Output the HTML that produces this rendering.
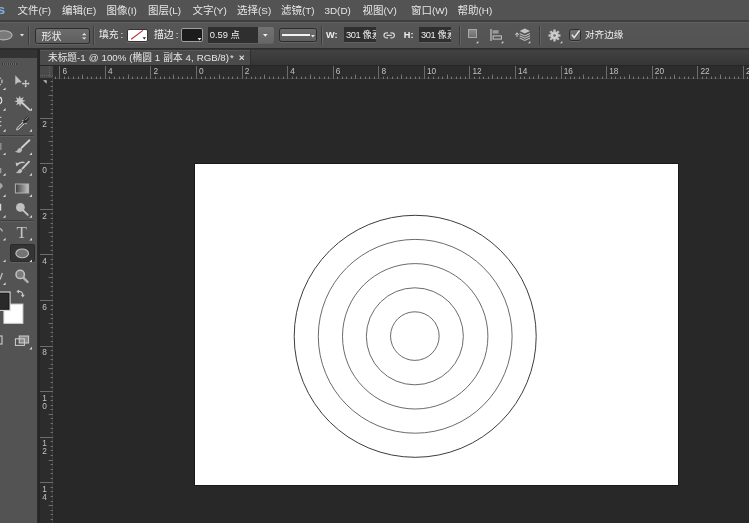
<!DOCTYPE html>
<html lang="zh"><head><meta charset="utf-8"><title>Photoshop</title>
<style>
html,body{margin:0;padding:0}
body{width:749px;height:523px;overflow:hidden;background:#282828;position:relative;font-family:"Liberation Sans","Noto Sans CJK SC",sans-serif;color:#dcdcdc}
.abs{position:absolute}
#menubar{position:absolute;left:0;top:0;width:749px;height:20px;background:#535353;border-bottom:2px solid #3e3e3e}
.mi .cjm{font-size:10.5px}
.mi{position:absolute;top:4px;font-size:9.9px;line-height:13px;white-space:nowrap;color:#e6e6e6;letter-spacing:0px}
#ps{position:absolute;left:-11.6px;top:3.4px;font-size:13.6px;font-weight:bold;color:#7fb0e2;line-height:14px}
#opt{position:absolute;left:0;top:22px;width:749px;height:27px;background:linear-gradient(#565656,#535353);border-top:1px solid #606060;box-sizing:border-box;border-bottom:1px solid #2e2e2e}
.ot{position:absolute;font-size:9.6px;line-height:12px;white-space:nowrap;color:#eeeeee}
.sep{position:absolute;top:26px;width:1px;height:19px;background:#3c3c3c;box-shadow:1px 0 0 #646464}
.dd{position:absolute;box-sizing:border-box;border:1px solid #2c2c2c;border-radius:2.5px;background:linear-gradient(#6c6c6c,#5e5e5e);box-shadow:0 1px 0 #626262}
.inp{position:absolute;background:#2f2f2f;box-sizing:border-box;overflow:hidden;box-shadow:0 1px 0 #616161}
#tabbar{position:absolute;left:38px;top:49px;width:711px;height:17px;background:linear-gradient(#424242,#353535);border-top:1px solid #343434;border-bottom:1px solid #262626;box-sizing:border-box}
#tab{position:absolute;left:40px;top:50px;width:210px;height:15px;background:#4b4b4b;border-right:1px solid #2e2e2e;box-shadow:inset 0 1px 0 #585858}
#tabt{position:absolute;left:48px;top:52px;font-size:9.7px;line-height:12px;white-space:nowrap;color:#e6e6e6;word-spacing:0.3px}
#tools{position:absolute;left:0;top:49px;width:37px;height:474px;background:#535353;border-right:1px solid #2c2c2c}
#toolhd{position:absolute;left:0;top:49px;width:37px;height:9px;background:#333;border-top:1px solid #2c2c2c;box-sizing:border-box}
#gap{position:absolute;left:38px;top:49px;width:2px;height:474px;background:#262626}
#hr{position:absolute;left:40px;top:66px;width:709px;height:13px;background:#2c2c2c}
#vr{position:absolute;left:40px;top:66px;width:13px;height:457px;background:#2c2c2c}
.hr{position:absolute;left:40px;top:66px}
.vr{position:absolute;left:40px;top:79px}
#corner{position:absolute;left:40px;top:66px;width:13px;height:12px;background:#494949}
#hbase{position:absolute;left:53px;top:78px;width:696px;height:1px;background:#3d3d3d}
#vbase{position:absolute;left:52px;top:79px;width:1px;height:444px;background:#3d3d3d}
.rl{position:absolute;font-size:8.3px;line-height:9px;color:#c2c2c2}
#doc{position:absolute;left:195.4px;top:163.7px;width:483px;height:321.4px;background:#fff;box-shadow:0 0 0 0.6px #111}
.ln{position:absolute;left:0;width:34px;height:1px;background:#3d3d3d;box-shadow:0 1px 0 #5e5e5e}
#all{position:absolute;left:0;top:0;width:749px;height:523px;will-change:transform}
</style></head><body><div id="all">

<div id="menubar"><span id="ps">Ps</span><span class="mi" style="left:17.5px"><span class="cjm">文件</span>(F)</span><span class="mi" style="left:62.0px"><span class="cjm">编辑</span>(E)</span><span class="mi" style="left:106.5px"><span class="cjm">图像</span>(I)</span><span class="mi" style="left:148.0px"><span class="cjm">图层</span>(L)</span><span class="mi" style="left:192.5px"><span class="cjm">文字</span>(Y)</span><span class="mi" style="left:237.0px"><span class="cjm">选择</span>(S)</span><span class="mi" style="left:281.0px"><span class="cjm">滤镜</span>(T)</span><span class="mi" style="left:324.5px">3D(D)</span><span class="mi" style="left:362.5px"><span class="cjm">视图</span>(V)</span><span class="mi" style="left:411.0px"><span class="cjm">窗口</span>(W)</span><span class="mi" style="left:457.5px"><span class="cjm">帮助</span>(H)</span></div>

<div id="opt"></div>
<!-- options bar content (absolute page coords) -->
<svg class="abs" style="left:0;top:29px" width="14" height="13" viewBox="0 0 14 13"><ellipse cx="3.5" cy="6.3" rx="8.6" ry="4.6" fill="#7a7a7a" stroke="#b4b4b4" stroke-width="1.1"/></svg>
<svg class="abs" style="left:20px;top:34.2px" width="5" height="3" viewBox="0 0 5 3"><path d="M0 0H4L2 2.5Z" fill="#e8e8e8"/></svg>
<div class="sep" style="left:28px"></div>
<div class="dd" style="left:35px;top:27.5px;width:54.5px;height:16px"></div>
<span class="ot" style="left:41.4px;top:30.5px;font-size:10px">形状</span>
<svg class="abs" style="left:81.5px;top:32.6px" width="5" height="7" viewBox="0 0 5 7"><path d="M0 2.2H4.4L2.2 0Z M0 4.4H4.4L2.2 6.6Z" fill="#e8e8e8"/></svg>
<div class="sep" style="left:93px"></div>
<span class="ot" style="left:99px;top:29.1px;font-size:9.8px">填充<span style="margin-left:2px">:</span></span>
<div class="abs" style="left:126.5px;top:28.5px;width:21px;height:13px;background:#fff;border:1px solid #333;border-radius:2px;box-sizing:border-box;box-shadow:0 1px 0 #666"></div>
<svg class="abs" style="left:127px;top:29px" width="20" height="12" viewBox="0 0 20 12"><path d="M4.2 10.2L16 1.4" stroke="#b5333a" stroke-width="1.15"/><path d="M15.6 8.3H19L17.3 10.4Z" fill="#222"/></svg>
<span class="ot" style="left:154px;top:29.1px;font-size:9.8px">描边<span style="margin-left:2.2px">:</span></span>
<div class="abs" style="left:180.5px;top:28.3px;width:22px;height:14px;background:#1c1c1c;border:1px solid #a0a0a0;border-radius:2px;box-sizing:border-box"></div>
<svg class="abs" style="left:196.5px;top:37.4px" width="5" height="4" viewBox="0 0 5 4"><path d="M0 0.4H4.6V3.6H0Z" fill="#1c1c1c"/><path d="M0.6 1H4.4L2.5 3.4Z" fill="#eee"/></svg>
<div class="inp" style="left:207.5px;top:27.3px;width:50.5px;height:15.4px"></div>
<span class="ot" style="left:209.8px;top:29px;font-size:9.3px">0.59 点</span>
<div class="abs" style="left:258px;top:27.3px;width:15.5px;height:15.4px;background:linear-gradient(#727272,#666);border-radius:0 2px 2px 0;box-shadow:0 1px 0 #616161"></div>
<svg class="abs" style="left:263.2px;top:34px" width="5" height="3" viewBox="0 0 5 3"><path d="M0 0H4.6L2.3 2.8Z" fill="#f0f0f0"/></svg>
<div class="dd" style="left:278.5px;top:28px;width:38.5px;height:13.6px"></div>
<div class="abs" style="left:282px;top:34.2px;width:27.5px;height:1.7px;background:#f2f2f2"></div>
<svg class="abs" style="left:310.6px;top:34.5px" width="4" height="3" viewBox="0 0 4 3"><path d="M0 0H3.8L1.9 2.5Z" fill="#e8e8e8"/></svg>
<div class="sep" style="left:321px"></div>
<span class="ot" style="left:326px;top:29px;font-weight:bold;font-size:9.2px">W:</span>
<div class="inp" style="left:343.7px;top:27.3px;width:32px;height:14.4px"><span class="ot" style="left:2.3px;top:1.6px;font-size:9.3px"><span style="letter-spacing:-0.45px">301</span><span style="margin-left:2.4px">像素</span></span></div>
<svg class="abs" style="left:383px;top:31.6px" width="13" height="7" viewBox="0 0 13 7"><path d="M5 0.9H3.5A2.5 2.5 0 0 0 3.5 5.9H5M7.4 0.9H8.9A2.5 2.5 0 0 1 8.9 5.9H7.4M3.6 3.4H8.8" fill="none" stroke="#d4d4d4" stroke-width="1.25"/></svg>
<span class="ot" style="left:403.8px;top:29px;font-weight:bold;font-size:9.2px">H:</span>
<div class="inp" style="left:418.7px;top:27.3px;width:32px;height:14.4px"><span class="ot" style="left:2.3px;top:1.6px;font-size:9.3px"><span style="letter-spacing:-0.45px">301</span><span style="margin-left:2.4px">像素</span></span></div>
<div class="sep" style="left:459px"></div>
<!-- path ops -->
<div class="abs" style="left:467.5px;top:29px;width:9.5px;height:9px;box-sizing:border-box;border:1px solid #a8a8a8;background:linear-gradient(#8a8a8a,#6e6e6e)"></div>
<svg class="abs" style="left:476.4px;top:40.8px" width="3" height="3" viewBox="0 0 3 3"><path d="M2.3 0V2.3H0Z" fill="#dcdcdc"/></svg>
<!-- align -->
<svg class="abs" style="left:490px;top:28.5px" width="13" height="12" viewBox="0 0 13 12"><path d="M1 0V12" stroke="#c8c8c8" stroke-width="1.2"/><rect x="2.6" y="1.2" width="6" height="3.4" fill="#9a9a9a"/><rect x="3.1" y="6.9" width="8.3" height="3.2" fill="none" stroke="#c8c8c8" stroke-width="1"/></svg>
<svg class="abs" style="left:501.3px;top:40.8px" width="3" height="3" viewBox="0 0 3 3"><path d="M2.3 0V2.3H0Z" fill="#dcdcdc"/></svg>
<!-- arrange -->
<svg class="abs" style="left:514.5px;top:28px" width="16" height="14" viewBox="0 0 16 14"><path d="M2 5.2V9 M0.3 6.8L2 4.8L3.7 6.8" stroke="#d0d0d0" stroke-width="1" fill="none"/><path d="M9.8 0.5L15 3L9.8 5.5L4.6 3Z" fill="#c4c4c4"/><path d="M4.6 5.4L9.8 7.9L15 5.4 M4.6 7.7L9.8 10.2L15 7.7 M4.6 10L9.8 12.5L15 10" stroke="#bdbdbd" stroke-width="1.1" fill="none"/></svg>
<svg class="abs" style="left:527.8px;top:40.8px" width="3" height="3" viewBox="0 0 3 3"><path d="M2.3 0V2.3H0Z" fill="#dcdcdc"/></svg>
<div class="sep" style="left:539px"></div>
<!-- gear -->
<svg class="abs" style="left:547.5px;top:28.7px" width="13" height="13" viewBox="-6.5 -6.5 13 13"><g fill="#c4c4c4"><circle r="4.1"/><rect x="-1.15" y="-6" width="2.3" height="12" transform="rotate(0)"/><rect x="-1.15" y="-6" width="2.3" height="12" transform="rotate(45)"/><rect x="-1.15" y="-6" width="2.3" height="12" transform="rotate(90)"/><rect x="-1.15" y="-6" width="2.3" height="12" transform="rotate(135)"/></g><circle r="3" fill="#cfcfcf"/><circle r="1.3" fill="#6a6a6a"/></svg>
<svg class="abs" style="left:560.4px;top:41.0px" width="3" height="3" viewBox="0 0 3 3"><path d="M2.3 0V2.3H0Z" fill="#dcdcdc"/></svg>
<!-- checkbox -->
<div class="abs" style="left:569px;top:29.2px;width:11.6px;height:11.4px;box-sizing:border-box;border:1px solid #2e2e2e;border-radius:2.5px;background:linear-gradient(#707070,#626262);box-shadow:0 1px 0 #686868"></div>
<svg class="abs" style="left:569px;top:28px" width="13" height="13" viewBox="0 0 13 13"><path d="M2.8 6.6L5.2 9.6L10.6 2.4" stroke="#ececec" stroke-width="1.5" fill="none"/></svg>
<span class="ot" style="left:585px;top:29.2px">对齐边缘</span>

<!-- tab bar -->
<div id="tabbar"></div><div id="tab"></div>
<span id="tabt">未标题-1 @ 100% (椭圆 1 副本 4, RGB/8)<span style="margin-left:-2px"> *</span></span>
<svg class="abs" style="left:239.3px;top:55px" width="6" height="6" viewBox="0 0 6 6"><path d="M0.6 0.6L4.8 4.8M4.8 0.6L0.6 4.8" stroke="#e6e6e6" stroke-width="1.1"/></svg>

<!-- rulers -->
<div id="hr"></div><div id="vr"></div><div id="hbase"></div><div id="vbase"></div>
<svg class="hr" width="709" height="13" viewBox="40 66 709 13"><path d="M55.5 76.6V79M64.5 76.6V79M68.5 76.6V79M73.5 76.6V79M78.5 76.6V79M87.5 76.6V79M91.5 76.6V79M96.5 76.6V79M100.5 76.6V79M109.5 76.6V79M114.5 76.6V79M119.5 76.6V79M123.5 76.6V79M132.5 76.6V79M137.5 76.6V79M141.5 76.6V79M146.5 76.6V79M155.5 76.6V79M160.5 76.6V79M164.5 76.6V79M169.5 76.6V79M178.5 76.6V79M182.5 76.6V79M187.5 76.6V79M191.5 76.6V79M201.5 76.6V79M205.5 76.6V79M210.5 76.6V79M214.5 76.6V79M223.5 76.6V79M228.5 76.6V79M232.5 76.6V79M237.5 76.6V79M246.5 76.6V79M251.5 76.6V79M255.5 76.6V79M260.5 76.6V79M269.5 76.6V79M273.5 76.6V79M278.5 76.6V79M283.5 76.6V79M292.5 76.6V79M296.5 76.6V79M301.5 76.6V79M305.5 76.6V79M314.5 76.6V79M319.5 76.6V79M324.5 76.6V79M328.5 76.6V79M337.5 76.6V79M342.5 76.6V79M346.5 76.6V79M351.5 76.6V79M360.5 76.6V79M365.5 76.6V79M369.5 76.6V79M374.5 76.6V79M383.5 76.6V79M387.5 76.6V79M392.5 76.6V79M397.5 76.6V79M406.5 76.6V79M410.5 76.6V79M415.5 76.6V79M419.5 76.6V79M428.5 76.6V79M433.5 76.6V79M438.5 76.6V79M442.5 76.6V79M451.5 76.6V79M456.5 76.6V79M460.5 76.6V79M465.5 76.6V79M474.5 76.6V79M479.5 76.6V79M483.5 76.6V79M488.5 76.6V79M497.5 76.6V79M501.5 76.6V79M506.5 76.6V79M510.5 76.6V79M520.5 76.6V79M524.5 76.6V79M529.5 76.6V79M533.5 76.6V79M542.5 76.6V79M547.5 76.6V79M551.5 76.6V79M556.5 76.6V79M565.5 76.6V79M570.5 76.6V79M574.5 76.6V79M579.5 76.6V79M588.5 76.6V79M592.5 76.6V79M597.5 76.6V79M602.5 76.6V79M611.5 76.6V79M615.5 76.6V79M620.5 76.6V79M624.5 76.6V79M633.5 76.6V79M638.5 76.6V79M643.5 76.6V79M647.5 76.6V79M656.5 76.6V79M661.5 76.6V79M665.5 76.6V79M670.5 76.6V79M679.5 76.6V79M684.5 76.6V79M688.5 76.6V79M693.5 76.6V79M702.5 76.6V79M706.5 76.6V79M711.5 76.6V79M715.5 76.6V79M725.5 76.6V79M729.5 76.6V79M734.5 76.6V79M738.5 76.6V79M747.5 76.6V79M752.5 76.6V79M757.5 76.6V79" stroke="#787878" stroke-width="1" fill="none"/><path d="M82.5 74.6V79M128.5 74.6V79M173.5 74.6V79M219.5 74.6V79M264.5 74.6V79M310.5 74.6V79M355.5 74.6V79M401.5 74.6V79M447.5 74.6V79M492.5 74.6V79M538.5 74.6V79M583.5 74.6V79M629.5 74.6V79M674.5 74.6V79M720.5 74.6V79" stroke="#787878" stroke-width="1" fill="none"/><path d="M59.5 66V79M105.5 66V79M150.5 66V79M196.5 66V79M242.5 66V79M287.5 66V79M333.5 66V79M378.5 66V79M424.5 66V79M469.5 66V79M515.5 66V79M561.5 66V79M606.5 66V79M652.5 66V79M697.5 66V79M743.5 66V79" stroke="#6c6c6c" stroke-width="1" fill="none"/></svg><span class="rl" style="left:62.4px;top:66.6px">6</span><span class="rl" style="left:108.0px;top:66.6px">4</span><span class="rl" style="left:153.5px;top:66.6px">2</span><span class="rl" style="left:199.1px;top:66.6px">0</span><span class="rl" style="left:244.7px;top:66.6px">2</span><span class="rl" style="left:290.2px;top:66.6px">4</span><span class="rl" style="left:335.8px;top:66.6px">6</span><span class="rl" style="left:381.4px;top:66.6px">8</span><span class="rl" style="left:427.0px;top:66.6px">10</span><span class="rl" style="left:472.5px;top:66.6px">12</span><span class="rl" style="left:518.1px;top:66.6px">14</span><span class="rl" style="left:563.7px;top:66.6px">16</span><span class="rl" style="left:609.2px;top:66.6px">18</span><span class="rl" style="left:654.8px;top:66.6px">20</span><span class="rl" style="left:700.4px;top:66.6px">22</span><span class="rl" style="left:745.9px;top:66.6px">24</span>
<svg class="vr" width="13" height="444" viewBox="40 79 13 444"><path d="M50.6 81.5H53M50.6 86.5H53M50.6 90.5H53M50.6 100.5H53M50.6 104.5H53M50.6 109.5H53M50.6 113.5H53M50.6 122.5H53M50.6 127.5H53M50.6 131.5H53M50.6 136.5H53M50.6 145.5H53M50.6 150.5H53M50.6 154.5H53M50.6 159.5H53M50.6 168.5H53M50.6 172.5H53M50.6 177.5H53M50.6 182.5H53M50.6 191.5H53M50.6 195.5H53M50.6 200.5H53M50.6 204.5H53M50.6 213.5H53M50.6 218.5H53M50.6 223.5H53M50.6 227.5H53M50.6 236.5H53M50.6 241.5H53M50.6 245.5H53M50.6 250.5H53M50.6 259.5H53M50.6 264.5H53M50.6 268.5H53M50.6 273.5H53M50.6 282.5H53M50.6 286.5H53M50.6 291.5H53M50.6 295.5H53M50.6 305.5H53M50.6 309.5H53M50.6 314.5H53M50.6 318.5H53M50.6 327.5H53M50.6 332.5H53M50.6 336.5H53M50.6 341.5H53M50.6 350.5H53M50.6 355.5H53M50.6 359.5H53M50.6 364.5H53M50.6 373.5H53M50.6 377.5H53M50.6 382.5H53M50.6 387.5H53M50.6 396.5H53M50.6 400.5H53M50.6 405.5H53M50.6 409.5H53M50.6 418.5H53M50.6 423.5H53M50.6 428.5H53M50.6 432.5H53M50.6 441.5H53M50.6 446.5H53M50.6 450.5H53M50.6 455.5H53M50.6 464.5H53M50.6 469.5H53M50.6 473.5H53M50.6 478.5H53M50.6 487.5H53M50.6 491.5H53M50.6 496.5H53M50.6 501.5H53M50.6 510.5H53M50.6 514.5H53M50.6 519.5H53M50.6 523.5H53" stroke="#6c6c6c" stroke-width="1" fill="none"/><path d="M48.6 95.5H53M48.6 141.5H53M48.6 186.5H53M48.6 232.5H53M48.6 277.5H53M48.6 323.5H53M48.6 368.5H53M48.6 414.5H53M48.6 460.5H53M48.6 505.5H53" stroke="#6c6c6c" stroke-width="1" fill="none"/><path d="M40 118.5H53M40 163.5H53M40 209.5H53M40 254.5H53M40 300.5H53M40 346.5H53M40 391.5H53M40 437.5H53M40 482.5H53M40 528.5H53" stroke="#6c6c6c" stroke-width="1" fill="none"/></svg><span class="rl" style="left:42.2px;top:120.4px">2</span><span class="rl" style="left:42.2px;top:166.0px">0</span><span class="rl" style="left:42.2px;top:211.6px">2</span><span class="rl" style="left:42.2px;top:257.1px">4</span><span class="rl" style="left:42.2px;top:302.7px">6</span><span class="rl" style="left:42.2px;top:348.3px">8</span><span class="rl" style="left:42.2px;top:393.8px">1</span><span class="rl" style="left:42.2px;top:401.5px">0</span><span class="rl" style="left:42.2px;top:439.4px">1</span><span class="rl" style="left:42.2px;top:447.1px">2</span><span class="rl" style="left:42.2px;top:485.0px">1</span><span class="rl" style="left:42.2px;top:492.7px">4</span><span class="rl" style="left:42.2px;top:530.6px">1</span><span class="rl" style="left:42.2px;top:538.3px">6</span>
<div id="corner"></div>
<div class="abs" style="left:49px;top:66px;width:1px;height:12px;background:repeating-linear-gradient(#626262 0 1px,transparent 1px 2px)"></div><div class="abs" style="left:40px;top:75px;width:13px;height:1px;background:repeating-linear-gradient(90deg,#626262 0 1px,transparent 1px 2px)"></div>
<svg class="abs" style="left:42.5px;top:79.5px" width="4" height="4" viewBox="0 0 4 4"><path d="M0 0.3H3.7V3.8Z" fill="#bdbdbd"/></svg>

<!-- tools -->
<div id="tools"></div><div id="toolhd"></div><div id="gap"></div>
<div class="abs" style="left:1.5px;top:62.6px;width:15px;height:2px;background:repeating-linear-gradient(90deg,#3a3a3a 0 1px,#6a6a6a 1px 2px)"></div>
<div class="ln" style="top:135px"></div>
<div class="ln" style="top:220px"></div>
<div class="abs" style="left:10.2px;top:244.4px;width:24.4px;height:18px;box-sizing:border-box;background:#343434;border:1px solid #2a2a2a;border-radius:2px;box-shadow:0 1px 0 #606060"></div>
<svg class="abs" style="left:0;top:58px" width="37" height="300" viewBox="0 58 37 300">
<defs><linearGradient id="gr" x1="0" x2="1" y1="0" y2="0"><stop offset="0" stop-color="#3e3e3e"/><stop offset="1" stop-color="#c4c4c4"/></linearGradient></defs>
<g fill="#d6d6d6">
<!-- right col triangles -->
<path d="M32 108v2.7h-2.7z M32 129v2.7h-2.7z M32 152.4v2.7h-2.7z M32 173v2.7h-2.7z M32 194.2v2.7h-2.7z M32 215v2.7h-2.7z M32 237.8v2.7h-2.7z M32 259.4v2.7h-2.7z M32 346.8v2.7h-2.7z"/>
<!-- left col triangles -->
<path d="M5.6 87.4v2.7h-2.7z M5.6 108v2.7h-2.7z M5.6 129v2.7h-2.7z M5.6 152.4v2.7h-2.7z M5.6 173v2.7h-2.7z M5.6 194.2v2.7h-2.7z M5.6 215v2.7h-2.7z M5.6 237.8v2.7h-2.7z M5.6 259.4v2.7h-2.7z M5.6 282.2v2.7h-2.7z"/>
</g>
<!-- left col partial icons -->
<g fill="none" stroke="#c4c4c4" stroke-width="1.2">
<ellipse cx="-3.5" cy="81.4" rx="5.6" ry="4.4" stroke-dasharray="2 1.2"/>
<circle cx="-1.6" cy="100.4" r="3.4" stroke="#e0e0e0"/>
<path d="M0 117.4H1.3 M0 121.6H1.3 M0 125.6H1.3"/>
<path d="M0 228.5Q2.6 229.5 2 231.5" />
<path d="M0 279.5L2.4 273" />
<rect x="-4" y="336" width="6" height="8"/>
</g>
<rect x="0" y="143" width="1.5" height="7" fill="#8c8c8c"/>
<rect x="0" y="168" width="1.4" height="5.2" fill="#9a9a9a"/>
<path d="M0 183Q3 184 2.6 186.5L0 189.4Z" fill="#a6a6a6"/>
<rect x="0" y="203.8" width="1.2" height="6.8" fill="#dcdcdc"/>

<!-- move tool -->
<path d="M15.3 75.3V84.7L17.6 82.5L21.9 82.3Z" fill="#c2c2c2"/>
<g stroke="#c8c8c8" stroke-width="1.1" fill="#c8c8c8"><path d="M22.6 83.6H28.8 M25.7 80.6V86.6" fill="none"/><path d="M25.7 79.8l1.4 1.6h-2.8z M25.7 87.4l1.4-1.6h-2.8z M21.8 83.6l1.6-1.4v2.8z M29.6 83.6l-1.6-1.4v2.8z" stroke="none"/></g>
<!-- magic wand -->
<path d="M19.8 95.4l1 3.1l2.9-1.6l-1.3 3l3.1 0.8l-3 1.3l1.6 2.9l-3.1-1.3l-0.9 3.2l-1.1-3.1l-2.9 1.5l1.4-3l-3.2-0.9l3.1-1.1l-1.6-2.9l3 1.3z" fill="#c6c6c6"/>
<path d="M22.6 103.3L29.4 109.6" stroke="#cdcdcd" stroke-width="1.9" stroke-linecap="round"/>
<!-- eyedropper -->
<path d="M16.6 130L17.2 127.6L23.6 121.6L25 123L18.8 129.2Z" fill="#6c6c6c" stroke="#c8c8c8" stroke-width="1"/>
<path d="M22.6 120.2L26.4 124" stroke="#d0d0d0" stroke-width="1.6"/>
<path d="M24.6 121.8L27.6 118.2" stroke="#2e2e2e" stroke-width="3.4" stroke-linecap="round"/>
<path d="M25.6 119.8L27.8 117.4" stroke="#9a9a9a" stroke-width="1" stroke-linecap="round"/>
<!-- brush -->
<path d="M29.4 140.2L21.6 147.8" stroke="#cfcfcf" stroke-width="1.9" stroke-linecap="round"/>
<path d="M14.8 151.6Q17.4 151.4 17.8 149.2Q19.6 147 21.8 148.6Q22.8 151 20.4 152.4Q17.4 153.4 14.8 151.6Z" fill="#bcbcbc"/>
<!-- history brush -->
<path d="M29 161.6L22.4 168.6" stroke="#cfcfcf" stroke-width="1.8" stroke-linecap="round"/>
<path d="M15.6 172.2Q18 172 18.4 170.2Q20 168.2 22 169.6Q23 171.8 20.8 173Q18 174 15.6 172.2Z" fill="#bcbcbc"/>
<path d="M16.6 165.2Q20 161.2 24.6 162.6" stroke="#c0c0c0" stroke-width="1.4" fill="none"/>
<path d="M15.6 162.6L19.4 163.4L16.4 166.6Z" fill="#c6c6c6"/>
<path d="M24.6 169.4l1.4 1.4 M25.6 172.6l1 1" stroke="#8a8a8a" stroke-width="0.9" stroke-dasharray="1 1"/>
<!-- gradient -->
<rect x="15.4" y="184" width="13.2" height="9" fill="url(#gr)" stroke="#b2b2b2" stroke-width="1"/>
<!-- dodge -->
<circle cx="20.4" cy="207.4" r="4.4" fill="#c0c0c0"/>
<path d="M23.4 210.6L27.8 214.8" stroke="#c8c8c8" stroke-width="1.8" stroke-linecap="round"/>
<!-- ellipse tool (selected) -->
<ellipse cx="22.2" cy="253.4" rx="6.3" ry="4.4" fill="#747474" stroke="#c0c0c0" stroke-width="1.1"/>
<!-- zoom -->
<circle cx="20.2" cy="274.4" r="4.2" fill="#7c7c7c" stroke="#c2c2c2" stroke-width="1.5"/>
<path d="M23.6 277.8L27.6 282" stroke="#b4b4b4" stroke-width="2.4" stroke-linecap="round"/>
<!-- swap arrows -->
<path d="M18.4 291.4Q22.6 291 22.8 295" stroke="#c4c4c4" stroke-width="1.2" fill="none"/>
<path d="M16.4 291.6l2.6-2v4z M22.8 297.4l-2-2.6h4z" fill="#c8c8c8"/>
<!-- bg swatch -->
<rect x="3.9" y="304.1" width="19" height="19.2" fill="#ffffff" stroke="#d8d8d8" stroke-width="1"/>
<!-- fg swatch -->
<rect x="-8.5" y="292.1" width="18.5" height="18.2" fill="#2a2a2a" stroke="#d4d4d4" stroke-width="1.3"/>
<rect x="-7.3" y="293.3" width="16.1" height="15.8" fill="none" stroke="#1e1e1e" stroke-width="1"/>
<!-- screen mode -->
<rect x="19.2" y="336" width="9.4" height="7" fill="#8a8a8a" stroke="#d0d0d0" stroke-width="1"/>
<rect x="15.4" y="338.8" width="9" height="6.6" fill="none" stroke="#d0d0d0" stroke-width="1"/>
</svg>
<span class="abs" style="left:16.5px;top:225px;font-family:'Liberation Serif',serif;font-size:16.9px;line-height:16px;color:#c4c4c4">T</span>


<!-- document -->
<div id="doc"></div>
<svg class="abs" style="left:0;top:0" width="749" height="523" viewBox="0 0 749 523"><circle cx="415.20" cy="336.30" r="121.0" fill="none" stroke="#3c3c3c" stroke-width="1"/><circle cx="415.20" cy="336.30" r="96.9" fill="none" stroke="#5a5a5a" stroke-width="0.9"/><circle cx="415.20" cy="336.30" r="72.7" fill="none" stroke="#5a5a5a" stroke-width="0.9"/><circle cx="414.85" cy="336.30" r="48.5" fill="none" stroke="#5a5a5a" stroke-width="0.9"/><circle cx="414.85" cy="336.10" r="24.3" fill="none" stroke="#5a5a5a" stroke-width="0.9"/></svg>
</div></body></html>
